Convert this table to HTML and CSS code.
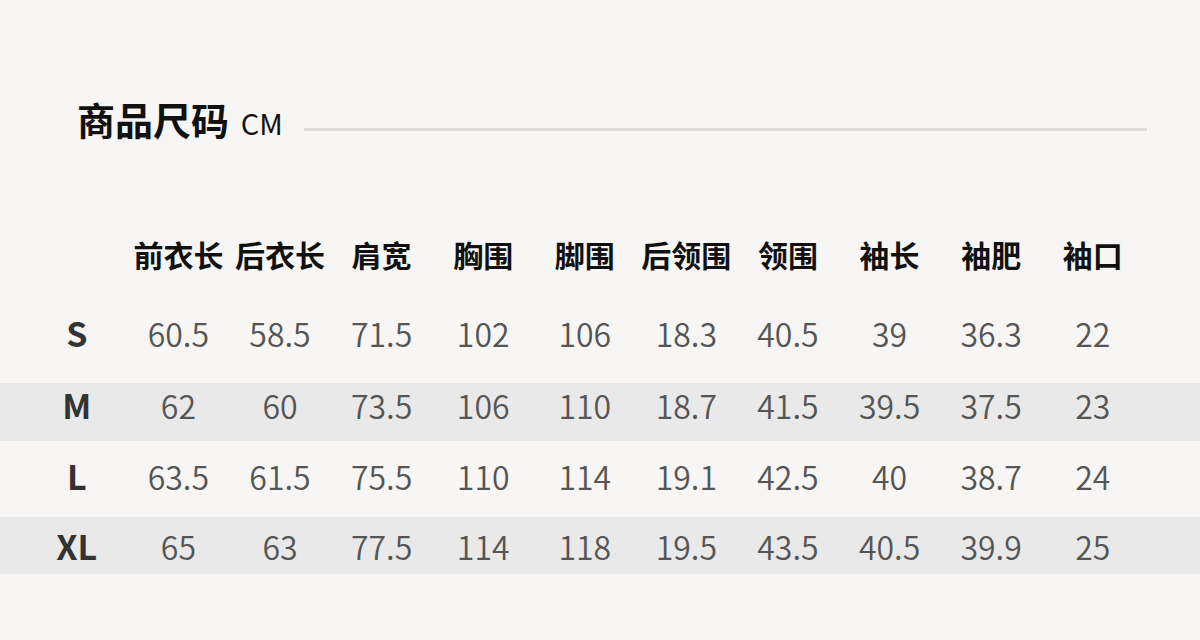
FILE: index.html
```html
<!DOCTYPE html>
<html lang="zh-CN">
<head>
<meta charset="utf-8">
<title>商品尺码</title>
<link rel="stylesheet" href="styles.css">
</head>
<body>
<main class="page">
  <header class="title-bar">
    <h1 class="title">商品尺码 <span class="unit">CM</span></h1>
    <div class="rule"></div>
  </header>
  <section class="size-table">
    <div class="row head">
      <div class="cell"></div>
      <div class="cell">前衣长</div>
      <div class="cell">后衣长</div>
      <div class="cell">肩宽</div>
      <div class="cell">胸围</div>
      <div class="cell">脚围</div>
      <div class="cell">后领围</div>
      <div class="cell">领围</div>
      <div class="cell">袖长</div>
      <div class="cell">袖肥</div>
      <div class="cell">袖口</div>
    </div>
    <div class="row">
      <div class="cell size">S</div>
      <div class="cell">60.5</div><div class="cell">58.5</div><div class="cell">71.5</div><div class="cell">102</div><div class="cell">106</div><div class="cell">18.3</div><div class="cell">40.5</div><div class="cell">39</div><div class="cell">36.3</div><div class="cell">22</div>
    </div>
    <div class="row stripe-a">
      <div class="cell size">M</div>
      <div class="cell">62</div><div class="cell">60</div><div class="cell">73.5</div><div class="cell">106</div><div class="cell">110</div><div class="cell">18.7</div><div class="cell">41.5</div><div class="cell">39.5</div><div class="cell">37.5</div><div class="cell">23</div>
    </div>
    <div class="row row-l">
      <div class="cell size">L</div>
      <div class="cell">63.5</div><div class="cell">61.5</div><div class="cell">75.5</div><div class="cell">110</div><div class="cell">114</div><div class="cell">19.1</div><div class="cell">42.5</div><div class="cell">40</div><div class="cell">38.7</div><div class="cell">24</div>
    </div>
    <div class="row stripe-b">
      <div class="cell size">XL</div>
      <div class="cell">65</div><div class="cell">63</div><div class="cell">77.5</div><div class="cell">114</div><div class="cell">118</div><div class="cell">19.5</div><div class="cell">43.5</div><div class="cell">40.5</div><div class="cell">39.9</div><div class="cell">25</div>
    </div>
  </section>
</main>
</body>
</html>
```

FILE: styles.css
```css
* { box-sizing: border-box; }
html, body {
  margin: 0;
  padding: 0;
  background: #f7f6f4;
}
body {
  width: 1200px;
  height: 640px;
  overflow: hidden;
  font-family: "Noto Sans CJK SC", "Noto Sans", sans-serif;
  color: #111;
}
.page {
  padding-top: 100px;
}
.title-bar {
  display: flex;
  align-items: center;
  padding: 0 53px 0 77px;
  height: 40px;
}
.title {
  margin: 0;
  font-size: 38px;
  line-height: 40px;
  font-weight: 700;
  color: #111;
  white-space: nowrap;
}
.unit {
  font-size: 29px;
  font-weight: 400;
  margin-left: 3px;
}
.rule {
  flex: 1;
  height: 3px;
  background: #dddcda;
  margin-left: 21px;
  margin-top: 18px;
}
.size-table {
  margin-top: 78px;
}
.row {
  display: grid;
  grid-template-columns: repeat(11, 101.6px);
  padding-left: 26px;
  height: 71px;
  align-items: center;
}
.row.head {
  height: 71px;
  margin-bottom: 8px;
}
.cell {
  text-align: center;
  font-size: 32px;
  line-height: 40px;
  font-weight: 350;
  color: #555;
  white-space: nowrap;
}
.head .cell {
  font-size: 30px;
  font-weight: 700;
  color: #111;
}
.cell.size {
  font-weight: 700;
  font-size: 34px;
  color: #333;
}
.stripe-a {
  height: 73px;
  background: linear-gradient(#f7f6f4 15px, #e9e9e9 15px);
}
.row-l {
  height: 69px;
}
.stripe-b {
  background: linear-gradient(#f7f6f4 7px, #e9e9e9 7px, #e9e9e9 64px, #f7f6f4 64px);
}
```
